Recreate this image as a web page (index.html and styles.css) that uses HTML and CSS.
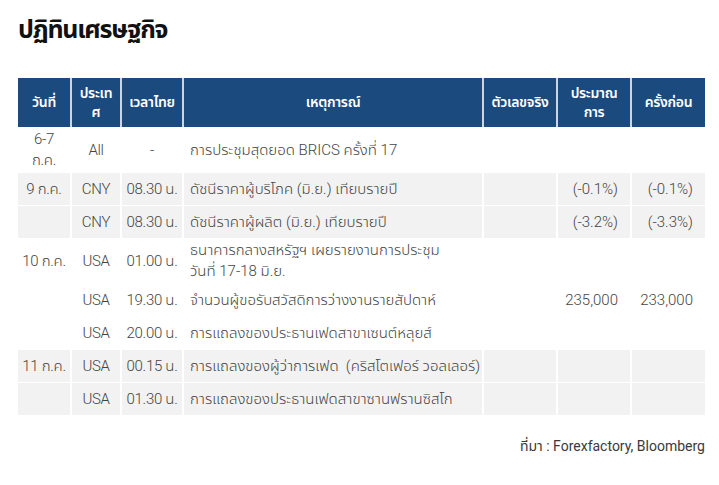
FILE: index.html
```html
<!DOCTYPE html>
<html lang="th">
<head>
<meta charset="utf-8">
<title>ปฏิทินเศรษฐกิจ</title>
<link rel="stylesheet" href="styles.css">
</head>
<body>
<main class="page">
  <h1 class="title">ปฏิทินเศรษฐกิจ</h1>
  <table class="cal">
    <colgroup>
      <col class="c-date"><col class="c-country"><col class="c-time"><col class="c-event"><col class="c-num"><col class="c-num"><col class="c-last">
    </colgroup>
    <thead>
      <tr>
        <th>วันที่</th>
        <th>ประเท<br>ศ</th>
        <th>เวลาไทย</th>
        <th>เหตุการณ์</th>
        <th>ตัวเลขจริง</th>
        <th>ประมาณ<br>การ</th>
        <th>ครั้งก่อน</th>
      </tr>
    </thead>
    <tbody>
      <tr class="tall">
        <td class="ctr">6-7<br>ก.ค.</td>
        <td class="ctr">All</td>
        <td class="ctr">-</td>
        <td class="ev">การประชุมสุดยอด BRICS ครั้งที่ 17</td>
        <td></td><td></td><td></td>
      </tr>
      <tr class="alt">
        <td class="ctr">9 ก.ค.</td>
        <td class="ctr">CNY</td>
        <td class="ctr">08.30 น.</td>
        <td class="ev">ดัชนีราคาผู้บริโภค (มิ.ย.) เทียบรายปี</td>
        <td></td>
        <td class="num">(-0.1%)</td>
        <td class="num">(-0.1%)</td>
      </tr>
      <tr class="alt">
        <td></td>
        <td class="ctr">CNY</td>
        <td class="ctr">08.30 น.</td>
        <td class="ev">ดัชนีราคาผู้ผลิต (มิ.ย.) เทียบรายปี</td>
        <td></td>
        <td class="num">(-3.2%)</td>
        <td class="num">(-3.3%)</td>
      </tr>
      <tr class="tall">
        <td class="ctr">10 ก.ค.</td>
        <td class="ctr">USA</td>
        <td class="ctr">01.00 น.</td>
        <td class="ev">ธนาคารกลางสหรัฐฯ เผยรายงานการประชุม<br>วันที่ 17-18 มิ.ย.</td>
        <td></td><td></td><td></td>
      </tr>
      <tr>
        <td></td>
        <td class="ctr">USA</td>
        <td class="ctr">19.30 น.</td>
        <td class="ev">จำนวนผู้ขอรับสวัสดิการว่างงานรายสัปดาห์</td>
        <td></td>
        <td class="num">235,000</td>
        <td class="num">233,000</td>
      </tr>
      <tr>
        <td></td>
        <td class="ctr">USA</td>
        <td class="ctr">20.00 น.</td>
        <td class="ev">การแถลงของประธานเฟดสาขาเซนต์หลุยส์</td>
        <td></td><td></td><td></td>
      </tr>
      <tr class="alt">
        <td class="ctr">11 ก.ค.</td>
        <td class="ctr">USA</td>
        <td class="ctr">00.15 น.</td>
        <td class="ev">การแถลงของผู้ว่าการเฟด&nbsp; (คริสโตเฟอร์ วอลเลอร์)</td>
        <td></td><td></td><td></td>
      </tr>
      <tr class="alt">
        <td></td>
        <td class="ctr">USA</td>
        <td class="ctr">01.30 น.</td>
        <td class="ev">การแถลงของประธานเฟดสาขาซานฟรานซิสโก</td>
        <td></td><td></td><td></td>
      </tr>
    </tbody>
  </table>
  <p class="source">ที่มา : Forexfactory, Bloomberg</p>
</main>
</body>
</html>
```
FILE: styles.css
```css
html, body {
  margin: 0;
  padding: 0;
  background: #ffffff;
}

body {
  font-family: Roboto, "Noto Sans Thai", sans-serif;
  color: #444444;
}

.page {
  padding: 14px 14px 0 18px;
}

.title {
  margin: 0;
  font-family: "Noto Sans Thai", sans-serif;
  font-size: 25px;
  font-weight: 700;
  letter-spacing: -1.2px;
  line-height: 32px;
  color: #111111;
}

.cal {
  margin-top: 32px;
  width: 687px;
  table-layout: fixed;
  border-collapse: separate;
  border-spacing: 0;
  font-size: 15px;
  font-weight: 300;
}

.c-date { width: 54px; }
.c-country { width: 50px; }
.c-time { width: 62px; }
.c-event { width: 300px; }
.c-num { width: 74px; }
.c-last { width: 73px; }

.cal th {
  background: #1b4a7e;
  color: #ffffff;
  font-family: "Noto Sans Thai", sans-serif;
  font-size: 14px;
  font-weight: 600;
  line-height: 19px;
  height: 49px;
  padding: 0 2px;
  text-align: center;
  vertical-align: middle;
  border-right: 2px solid #cfd5de;
  box-sizing: border-box;
  letter-spacing: -0.3px;
}

.cal th:last-child {
  border-right: 0;
}

.cal td {
  height: 33px;
  padding: 0 6px;
  line-height: 20px;
  vertical-align: middle;
  border-right: 2px solid #ffffff;
  border-top: 1px solid #ffffff;
  box-sizing: border-box;
  white-space: nowrap;
  overflow: visible;
}

.cal td:last-child {
  border-right: 0;
}

.cal tr.tall td {
  height: 45px;
  line-height: 21px;
}

.cal tr.alt td {
  background: #f2f2f2;
}

.ctr {
  text-align: center;
}

.cal td.ctr {
  padding: 0 1px;
  letter-spacing: -0.3px;
}

.ev {
  text-align: left;
}

.num {
  text-align: right;
}

.cal td.num {
  padding-right: 12px;
}

.source {
  margin: 21px 0 0 0;
  width: 687px;
  text-align: right;
  font-size: 14px;
  font-weight: 400;
  color: #3a3a3a;
}
```
